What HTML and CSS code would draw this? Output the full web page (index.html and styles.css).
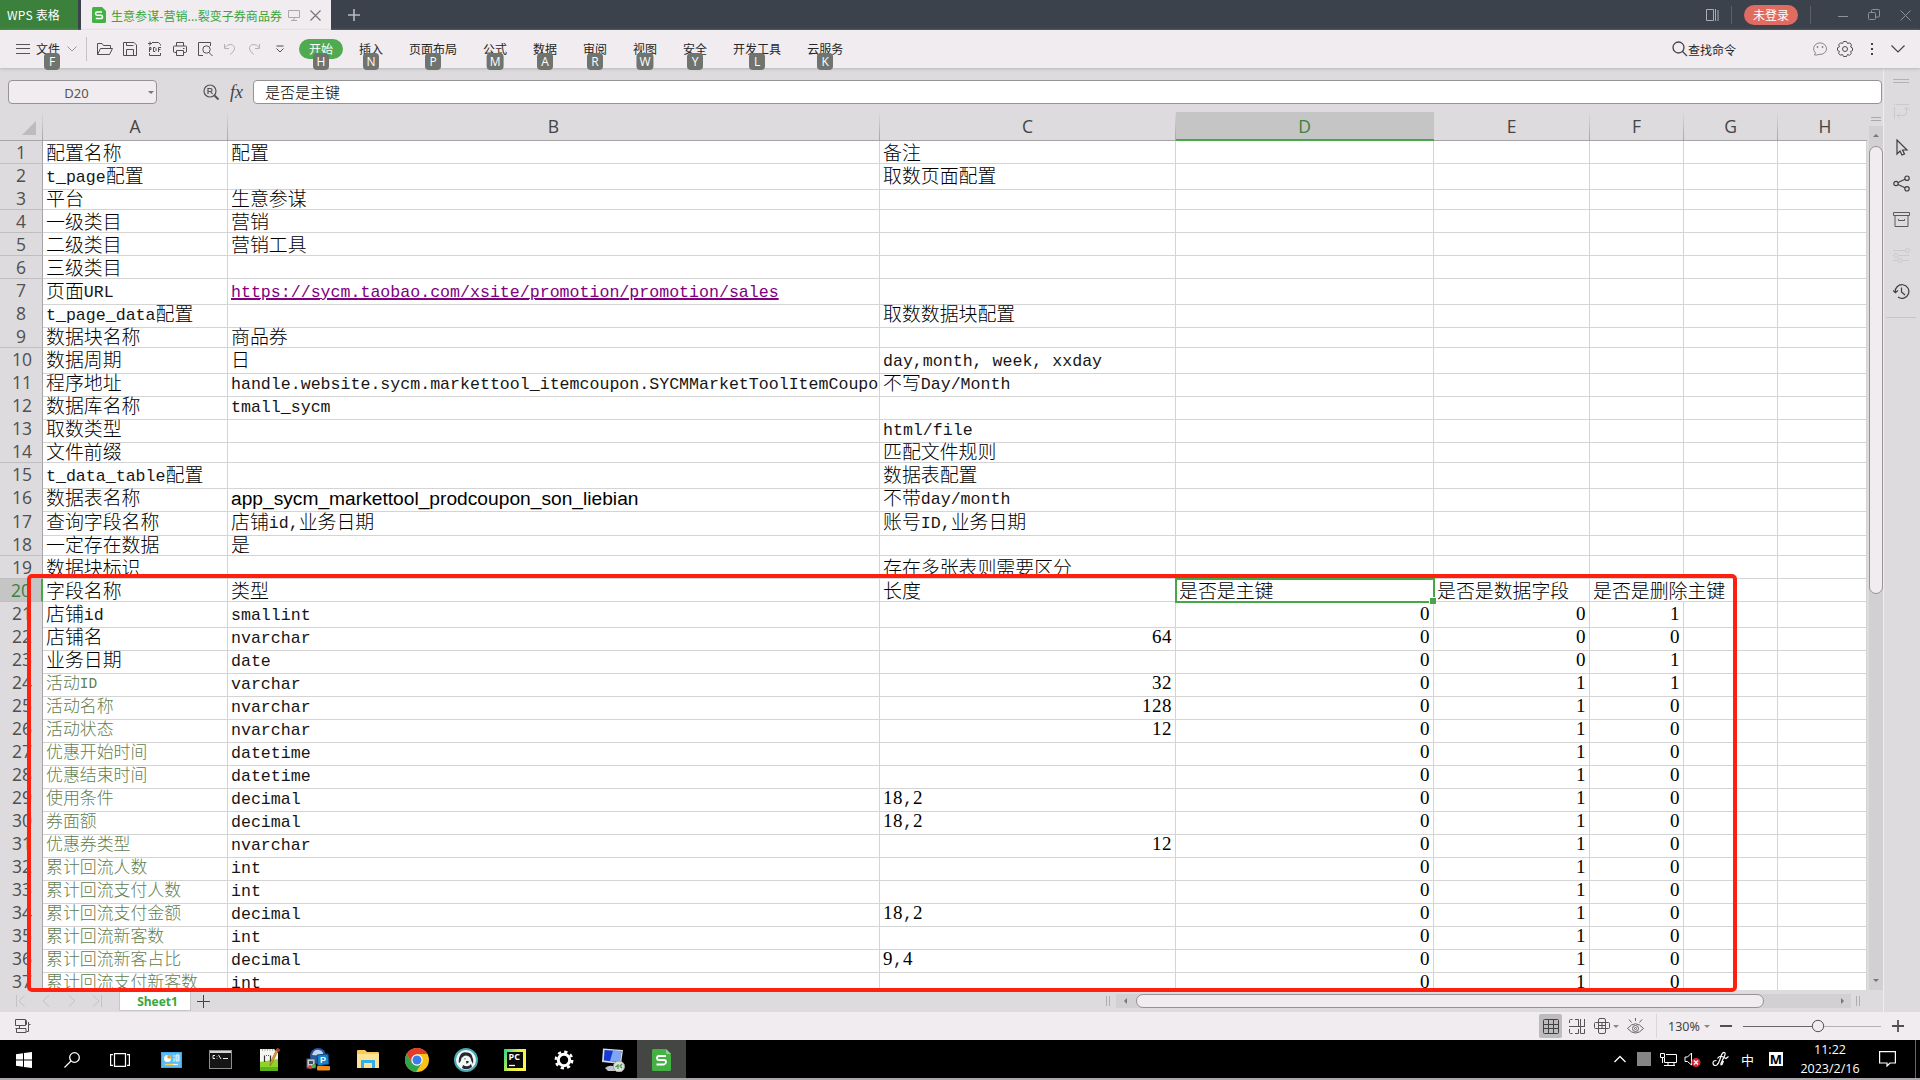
FILE: index.html
```html
<!DOCTYPE html>
<html lang="zh-CN">
<head>
<meta charset="utf-8">
<title>WPS 表格</title>
<link rel="stylesheet" href="styles.css">
</head>
<body>
<div class="app">
  <header class="titlebar">
    <div class="brand">WPS 表格</div>
    <div class="doc-tab">
      <svg class="doc-logo" width="14" height="16" viewBox="0 0 14 16"><path d="M1.500 0H10L14 4V14.500Q14 16 12.500 16H1.500Q0 16 0 14.500V1.500Q0 0 1.500 0Z" fill="#45b145"/><path d="M10 5H5.200Q3.500 5 3.500 6.600T5.200 8.200H8.800Q10.500 8.200 10.500 9.900T8.800 11.500H3.800" fill="none" stroke="#fff" stroke-width="1.500"/></svg>
      <span class="doc-name">生意参谋-营销...裂变子券商品券</span>
      <svg class="doc-monitor" width="12" height="12" viewBox="0 0 12 12" fill="none" stroke="#aaa8ab"><path d="M.5 1.500H11.500V8.500H.5ZM6 8.500V11M3 11.500H9"/></svg>
      <svg class="doc-close" width="11" height="11" viewBox="0 0 11 11" fill="none" stroke="#777579" stroke-width="1.200"><path d="M.5.5L10.500 10.500M10.500.5L.5 10.500"/></svg>
    </div>
    <svg class="new-tab" width="12" height="12" viewBox="0 0 12 12"><path d="M6 0V12M0 6H12" stroke="#b7bbc0" stroke-width="1.600"/></svg>
    <div class="window-tools">
      <svg width="14" height="14" viewBox="0 0 14 14" fill="none" stroke="#a9adb3"><path d="M1.500 1.500H8.500V12.500H1.500ZM10.500 1V13M13 2V13"/></svg>
      <i class="sep"></i>
      <div class="login">未登录</div>
      <i class="sep"></i>
      <svg width="12" height="12" viewBox="0 0 12 12" stroke="#8e939a"><path d="M1 7.500H11"/></svg>
      <svg width="12" height="12" viewBox="0 0 12 12" fill="none" stroke="#8e939a"><rect x=".5" y="3.500" width="7" height="7" rx="1"/><path d="M3.500 3V1.500Q3.500.5 4.500.5H10.500Q11.500.5 11.500 1.500V7Q11.500 8 10.500 8H8"/></svg>
      <svg width="11" height="11" viewBox="0 0 11 11" stroke="#8e939a"><path d="M.5.5L10.500 10.500M10.500.5L.5 10.500"/></svg>
    </div>
  </header>

  <nav class="ribbon">
    <div class="file-menu">
      <svg width="14" height="10" viewBox="0 0 14 10" stroke="#555"><path d="M0 .5H14M0 4.500H14M0 9.500H14"/></svg>
      <div class="menu-item file">文件<kbd>F</kbd></div>
      <svg class="file-arrow" width="10" height="6" viewBox="0 0 10 6" fill="none" stroke="#9b999c"><path d="M.5.5L5 5L9.500.5"/></svg>
    </div>
    <div class="quick">
      <svg width="16" height="16" viewBox="0 0 16 16" fill="none" stroke="#505050"><path d="M.5 13.500V2.500H5L6.500 4.500H13.500V7M.5 13.500L3.500 7.500H15.500L12.500 13.500Z"/></svg>
      <svg width="16" height="16" viewBox="0 0 16 16" fill="none" stroke="#505050"><path d="M1.500 1.500H12L14.500 4V14.500H1.500ZM4.500 1.500V4.500H11.500M4.500 14.500V8.500H11.500V14.500"/></svg>
      <svg width="16" height="16" viewBox="0 0 16 16" fill="none" stroke="#505050"><path d="M5 1.500H11.500L13.500 3.500V4.500M2.500 4.500V4M1 2.500H5M3 .5V4M2.500 12V14.500H13.500V12"/><path d="M2.500 11V6.500H4V8.500H2.500M6.500 6.500V10.500H8L9 9.500V7.500L8 6.500ZM11.500 11V6.500H14M11.500 8.500H13.500"/></svg>
      <svg width="16" height="16" viewBox="0 0 16 16" fill="none" stroke="#505050"><path d="M4.500 5V1.500H11.500V5M4 11.500H2.500Q1.500 11.500 1.500 10V6Q1.500 5 2.500 5H13.500Q14.500 5 14.500 6V10Q14.500 11.500 13.500 11.500H12M4.500 9.500H11.500V14.500H4.500ZM11 7.500H12.500"/></svg>
      <svg width="16" height="16" viewBox="0 0 16 16" fill="none" stroke="#505050"><path d="M6 14.500H1.500V1.500H13.500V5"/><circle cx="9.500" cy="8.500" r="3.700"/><path d="M12 11.500L15.500 15"/></svg>
      <svg width="16" height="16" viewBox="0 0 16 16" fill="none" stroke="#b5b2b5"><path d="M2.500 3V7.500H7M2.500 7Q5 3 9 3.500Q13 4.500 12.500 8Q12 11 8 13.500"/></svg>
      <svg width="16" height="16" viewBox="0 0 16 16" fill="none" stroke="#b5b2b5"><path d="M12.500 3V7.500H8M12.500 7Q10 3 6 3.500Q2 4.500 2.500 8Q3 11 7 13.500"/></svg>
      <svg class="quick-more" width="8" height="8" viewBox="0 0 8 8" fill="none" stroke="#505050"><path d="M.5 1H7.500M.5 3.500L4 7L7.500 3.500"/></svg>
    </div>
    <div class="tabs">
      <div class="menu-item active">开始<kbd>H</kbd></div>
      <div class="menu-item">插入<kbd>N</kbd></div>
      <div class="menu-item">页面布局<kbd>P</kbd></div>
      <div class="menu-item">公式<kbd>M</kbd></div>
      <div class="menu-item">数据<kbd>A</kbd></div>
      <div class="menu-item">审阅<kbd>R</kbd></div>
      <div class="menu-item">视图<kbd>W</kbd></div>
      <div class="menu-item">安全<kbd>Y</kbd></div>
      <div class="menu-item">开发工具<kbd>L</kbd></div>
      <div class="menu-item">云服务<kbd>K</kbd></div>
    </div>
    <div class="find">
      <svg width="16" height="16" viewBox="0 0 16 16" fill="none" stroke="#444" stroke-width="1.300"><circle cx="6.500" cy="6.500" r="5.500"/><path d="M10.500 10.500L15 15"/></svg>
      <span>查找命令</span>
    </div>
    <div class="ribbon-end">
      <svg width="16" height="16" viewBox="0 0 16 16" fill="none" stroke="#8b898c"><path d="M2.500 14L3.500 11.800A6.500 5.800 0 1 1 7 13.400Q5 14.300 2.500 14"/><path d="M5.500 5V7M10.500 5V7" stroke-width="1.400"/></svg>
      <svg width="18" height="18" viewBox="0 0 18 18" fill="none" stroke="#505050"><path d="M7.500 1.500H10.500L11.500 3.500L13.800 2.800L15.500 5L14.600 7L16.500 8V10.500L14.600 11.500L15.300 13.500L13.500 15.300L11.500 14.500L10.500 16.500H7.500L6.500 14.500L4.300 15.200L2.600 13.300L3.400 11.400L1.500 10.400V7.800L3.400 6.800L2.700 4.800L4.500 2.800L6.500 3.500Z"/><circle cx="9" cy="9" r="2.500"/></svg>
      <svg width="4" height="14" viewBox="0 0 4 14" fill="#444"><path d="M1 1H3V3H1ZM1 6H3V8H1ZM1 11H3V13H1Z"/></svg>
      <svg width="14" height="8" viewBox="0 0 14 8" fill="none" stroke="#444" stroke-width="1.200"><path d="M.5.5L7 7L13.500.5"/></svg>
    </div>
  </nav>

  <div class="main">
    <section class="workspace">
      <div class="formula-bar">
        <div class="name-box"><span>D20</span><i></i></div>
        <svg class="fx-find" width="17" height="17" viewBox="0 0 17 17" fill="none" stroke="#555" stroke-width="1.200"><circle cx="7" cy="7" r="6"/><path d="M11.500 11.500L15.500 15.500" stroke-width="2"/><path d="M5 10V4.500H7.500Q9 4.500 9 6T7.500 7.500H5M7.500 7.500L9.500 10"/></svg>
        <span class="fx">fx</span>
        <div class="formula-input">是否是主键</div>
      </div>
      <div class="sheet-area">
        <div class="sheet" id="sheet"></div>
        <div class="vscroll">
          <svg width="10" height="4" viewBox="0 0 10 4" stroke="#aaa8ab"><path d="M0 .5H10M0 3.500H10"/></svg>
          <div class="vtrack"><i class="up"></i><div class="vthumb"></div><i class="down"></i></div>
        </div>
        <div class="annotation"></div>
      </div>
      <div class="sheet-bar">
        <svg class="sheet-nav" width="88" height="12" viewBox="0 0 88 12" fill="none" stroke="#c4c2c5"><path d="M1.500 0V12M9.500 .5L4 6L9.500 11.500M34 .5L28 6L34 11.500M54 .5L60 6L54 11.500M78 .5L84 6L78 11.500M86.500 0V12"/></svg>
        <div class="sheet-tab">Sheet1</div>
        <svg class="sheet-add" width="13" height="13" viewBox="0 0 13 13" stroke="#444"><path d="M6.500 0V13M0 6.500H13"/></svg>
        <div class="hscroll">
          <i class="grip"></i>
          <div class="htrack"><i class="left"></i><div class="hthumb"></div><i class="right"></i></div>
          <i class="grip"></i>
        </div>
      </div>
    </section>
    <aside class="sidebar">
      <svg class="side-grip" width="16" height="4" viewBox="0 0 16 4" stroke="#b3b1b4"><path d="M0 .5H16M0 3.500H16"/></svg>
      <svg width="17" height="17" viewBox="0 0 17 17" fill="none" stroke="#cbc9cc"><path d="M3 1.500H16M1.500 4V16M1 1.500H2M4 12.500H10Q13.500 12.500 13.500 9V4.500M10.500 7L13.500 4L16.500 7M7 9.500L4 12.500L7 15.500"/></svg>
      <svg width="17" height="17" viewBox="0 0 17 17" fill="none" stroke="#3f3f3f" stroke-width="1.200"><path d="M4 1V15L7 12L9 16L11.500 15L9.500 11H14Z"/></svg>
      <svg width="17" height="17" viewBox="0 0 17 17" fill="none" stroke="#3f3f3f" stroke-width="1.200"><circle cx="3" cy="8.500" r="2.200"/><circle cx="14" cy="3.200" r="2.200"/><circle cx="14" cy="13.800" r="2.200"/><path d="M5 7.500L12 4.200M5 9.500L12 12.800"/></svg>
      <svg width="17" height="17" viewBox="0 0 17 17" fill="none" stroke="#5a5a5a"><path d="M.5 1.500H16.500V4.500H.5ZM2 4.500V15.500H15V4.500M5.500 8V9.500H11.500V8"/></svg>
      <svg width="17" height="17" viewBox="0 0 17 17" fill="none" stroke="#cbc9cc"><path d="M0 3.500H12.500M0 8.500H1M5.500 8.500H16M0 13.500H5M9.500 13.500H16"/><circle cx="14.500" cy="3.500" r="2"/><circle cx="3" cy="8.500" r="2"/><circle cx="7" cy="13.500" r="2"/></svg>
      <svg width="17" height="17" viewBox="0 0 17 17" fill="none" stroke="#3f3f3f" stroke-width="1.200"><path d="M2.300 9.500A6.800 6.800 0 1 1 5 14M0 7.500L2.300 9.800L5 7.500M8.500 4.500V9L12 12"/></svg>
      <i class="side-line"></i>
    </aside>
  </div>

  <footer class="statusbar">
    <svg class="macro" width="16" height="16" viewBox="0 0 16 16" fill="none" stroke="#505050"><path d="M.5 1.500H10.500V7.500H.5ZM10.500 3.500L11.500 2.500V6.500L10.500 5.500M4.500 7.500V10.500M.5 10.500H11V14.500H1.500V11M11.500 13.500H13.500V6.500H15.500M13.500 6.500V4"/></svg>
    <div class="view-tools">
      <div class="view-on"><svg width="16" height="15" viewBox="0 0 16 15" fill="none" stroke="#404040"><rect x=".5" y=".5" width="15" height="14" rx="1"/><path d="M5.500 0V15M10.500 0V15M0 5.500H16M0 9.500H16"/></svg></div>
      <svg width="16" height="15" viewBox="0 0 16 15" fill="none" stroke="#555"><path d="M.5 4V1.500Q.5.500 1.500.500H3.500M6 .5H9.500V7.500M0 7.500H16M11.500 0V7.500M15.500 0V7.500M.5 10V13.500Q.5 14.500 1.500 14.500H3.500M6 14.500H9.500V10M11.500 7.500V14.500H15.500V10"/></svg>
      <svg width="16" height="16" viewBox="0 0 16 16" fill="none" stroke="#555"><rect x="4.500" y=".5" width="7" height="15" rx="1.500"/><rect x=".5" y="4.500" width="15" height="6" rx="1"/><path d="M4.500 7.500H11.500M8 4.500V10.500"/></svg>
      <i class="caret"></i>
      <svg width="17" height="16" viewBox="0 0 17 16" fill="none" stroke="#666"><path d="M.5 10.500Q8.500 1 16.500 10.500Q8.500 19.500.5 10.500ZM8.500 0V3M2 1.500L4.500 4.500M15 1.500L12.500 4.500"/><circle cx="8.500" cy="10.500" r="3"/><circle cx="8.500" cy="10.500" r="1"/></svg>
      <i class="status-sep"></i>
      <span class="zoom-value">130%</span>
      <i class="caret"></i>
      <svg class="zoom-slider" width="184" height="14" viewBox="0 0 184 14" fill="none"><path d="M0 7H12M172 7H184M178 1V13" stroke="#505050" stroke-width="1.800"/><path d="M23 7.500H92" stroke="#666"/><path d="M104 7.500H161" stroke="#b3b1b4"/><circle cx="98" cy="7" r="5.700" stroke="#555" fill="#f0ecef"/></svg>
    </div>
  </footer>

  <div class="taskbar">
    <div class="task sys"><svg width="16" height="16" viewBox="0 0 16 16" fill="#fff"><path d="M0 2.200L7 1.200V7.500H0ZM8 1L16 0V7.500H8ZM0 8.500H7V14.800L0 13.800ZM8 8.500H16V16L8 15Z"/></svg></div>
    <div class="task sys"><svg width="16" height="16" viewBox="0 0 16 16" fill="none" stroke="#fff" stroke-width="1.300"><circle cx="10.500" cy="5.500" r="4.800"/><path d="M7 9L.5 15.500"/></svg></div>
    <div class="task sys"><svg width="20" height="14" viewBox="0 0 20 14" fill="none" stroke="#fff" stroke-width="1.200"><path d="M4.500.6H15.500V13.400H4.500ZM3 1.600H.6V12.400H3M17 1.600H19.400V12.400H17"/></svg></div>
    <div class="task first"><svg width="21" height="16" viewBox="0 0 21 16"><rect width="21" height="16" fill="#3fa9e8"/><rect x="1" y="1" width="19" height="14" fill="#5bbdf2"/><circle cx="6.500" cy="6.500" r="3.500" fill="#fff"/><path d="M6.500 6.500V3A3.500 3.500 0 0 1 10 6.500Z" fill="#f39b1d"/><path d="M12 4H14M12 7H14M12 9H14M15 3H18V9H15Z" stroke="#e5f6ff" fill="#9edaf9"/><path d="M4 12.500H12" stroke="#ffd34b" stroke-width="1.300"/><path d="M12 12.500H17" stroke="#e5f6ff" stroke-width="1.300"/></svg></div>
    <div class="task"><svg width="23" height="19" viewBox="0 0 23 19"><rect x=".5" y=".5" width="22" height="18" fill="#161616" stroke="#8d8d8d"/><path d="M1 2H22" stroke="#d6d6d6" stroke-width="2"/><path d="M6 5.500H4V8.500H6M8 6V6.500M8 8V8.500M9.500 5L12 9M14 8.500H19" stroke="#ededed" fill="none"/></svg></div>
    <div class="task"><svg width="24" height="24" viewBox="0 0 24 24"><path d="M2 1H16L20 5V23H2Z" fill="#f4f6ef"/><path d="M2 14L20 11V23H2Z" fill="#8fd32a"/><path d="M2 19H20V23H2Z" fill="#58b51c"/><path d="M4 2H17" stroke="#99a" stroke-dasharray="1 1.500" stroke-width="1.500"/><path d="M6.500 14V7.500M8 7.500H8.800M10 7.500H10.800M12.500 7.500V14" stroke="#333" fill="none" stroke-width="1.200"/><path d="M21 1L14 15L12 18L12.500 14L19 .5Z" fill="#e5a52d" stroke="#8d5c22" stroke-width=".6"/><path d="M19 .5L22.500 1.500L21 4L18 2.500Z" fill="#b8392e"/></svg></div>
    <div class="task"><svg width="25" height="24" viewBox="0 0 25 24"><circle cx="12" cy="8" r="8" fill="#2456a7"/><path d="M6 7Q8 1 13 2Q18 3 17 8" fill="#c2d5ec"/><path d="M11 7L22 6L23 16L12 18Z" fill="#1683cf" stroke="#0b487d"/><text x="14" y="15" class="icon-p">P</text><rect x="1" y="11" width="8" height="9" fill="#c5ced9" stroke="#49596b"/><path d="M3 13H7V16H3Z" fill="#3c4c5b"/><circle cx="4" cy="19" r="2" fill="#e53c31"/><circle cx="8" cy="18" r="2" fill="#4bae3a"/><rect x="11" y="18" width="13" height="4.500" rx="1" fill="#f38b1b"/></svg></div>
    <div class="task"><svg width="22" height="19" viewBox="0 0 22 19"><path d="M0 1Q0 0 1 0H8L10 2H21Q22 2 22 3V18H0Z" fill="#f7ca59"/><path d="M0 4H22V18H0Z" fill="#ffe394"/><path d="M4 18V10H18V18H15V13H7V18Z" fill="#34aeea"/></svg></div>
    <div class="task"><svg width="24" height="24" viewBox="0 0 24 24"><circle cx="12" cy="12" r="12" fill="#fbc116"/><path d="M1.600 6A12 12 0 0 1 22.400 6H12L7 15Z" fill="#e33b2e"/><path d="M1.600 6A12 12 0 0 0 11 24L17 14.500L7 15Z" fill="#2ea44e"/><circle cx="12" cy="12" r="5.700" fill="#fff"/><circle cx="12" cy="12" r="4.500" fill="#3b7ded"/></svg></div>
    <div class="task"><svg width="24" height="24" viewBox="0 0 24 24"><circle cx="12" cy="12" r="11" fill="#f2f7f8" stroke="#48a9b5" stroke-width="2"/><path d="M7 6Q9 3.500 13 4.500Q17 4.500 18 8Q20 12 19 16Q17 13 16.500 10L15 8.500Q12 7 10 8L7.500 10Q7 14 5 15Q4 10 7 6ZM10.500 10L12 11L10.500 11.500ZM12 13Q15 12.500 15 14L12.500 16ZM9 17Q14 20 17 16L18 19Q13 23 8 20Z" fill="#26292b"/></svg></div>
    <div class="task"><svg width="22" height="22" viewBox="0 0 22 22"><defs><linearGradient id="pyc" x1="0" y1="0" x2="1" y2=".5"><stop offset="0" stop-color="#20d68b"/><stop offset=".6" stop-color="#e6ef45"/><stop offset="1" stop-color="#fcf84a"/></linearGradient></defs><rect width="22" height="22" fill="url(#pyc)"/><rect x="3" y="3" width="16" height="16" fill="#080808"/><text x="4.500" y="11" class="icon-pc">PC</text><path d="M5 16.500H11" stroke="#fff" stroke-width="1.300"/></svg></div>
    <div class="task"><svg width="20" height="20" viewBox="0 0 20 20"><circle cx="10" cy="10" r="5.700" fill="none" stroke="#fff" stroke-width="3"/><circle cx="10" cy="10" r="8.200" fill="none" stroke="#fff" stroke-width="2.500" stroke-dasharray="3.220 3.220"/></svg></div>
    <div class="task"><svg width="24" height="24" viewBox="0 0 24 24"><path d="M4 20Q9 16 14 19L18 23H7Z" fill="#c1c4c6"/><path d="M2 .5L22 2L20 16L1 14Z" fill="#d6dbe0"/><path d="M3.500 2L20.500 3.300L18.500 14.300L2.800 12.500Z" fill="#1639d3"/><path d="M12 2.600L20.500 3.300L19 14L9 13Z" fill="#7fa5f3"/><circle cx="18" cy="18.500" r="5.500" fill="#dfe1de" stroke="#9ba09a"/><path d="M14.500 19L17 17V21M21 16L19 18L21 20" stroke="#3b9a3e" stroke-width="1.300" fill="none"/></svg></div>
    <div class="task current"><svg width="19" height="22" viewBox="0 0 19 22"><path d="M1.500 0H14L19 5V20.500Q19 22 17.500 22H1.500Q0 22 0 20.500V1.500Q0 0 1.500 0Z" fill="#45b145"/><path d="M14 0L19 5H15Q14 5 14 4Z" fill="#8bd08b"/><path d="M14 7H7Q5 7 5 9T7 11H12Q14 11 14 13T12 15.500H4.500" fill="none" stroke="#fff" stroke-width="1.800"/></svg></div>
    <div class="tray">
      <svg width="12" height="8" viewBox="0 0 12 8" fill="none" stroke="#fff" stroke-width="1.300"><path d="M.5 7L6 1.500L11.500 7"/></svg>
      <i class="tray-square"></i>
      <svg width="17" height="15" viewBox="0 0 17 15" fill="none" stroke="#fff"><path d="M6 2.500H16.500V10.500H4.500V6M8 10.500V13M14 10.500V13M4 13.500H15M.5 1.500H4.500V5.500H.5ZM2.500 5.500V11"/></svg>
      <svg width="17" height="15" viewBox="0 0 17 15" fill="none"><path d="M1 5H3.500L7.500 1V13L3.500 9.500H1Z" stroke="#fff"/><circle cx="12" cy="10.500" r="4.500" fill="#d92632"/><path d="M10 8.500L14 12.500M14 8.500L10 12.500" stroke="#fff" stroke-width="1.400"/></svg>
      <svg width="17" height="16" viewBox="0 0 17 16" fill="none" stroke="#fff" stroke-width="1.200"><path d="M4.500 9.500Q1 9.500 1 12T3.500 14.500Q5.500 14.500 6 12M6 13Q8 9 9 5Q10.500 1 12.500 1.500Q14 2.500 12 6L9 12.500Q8.500 14.500 10 13.500L11.500 10M5.500 7.500Q7 4.500 10 5.500L14 7.500L16.500 5.500"/></svg>
      <span class="ime">中</span>
      <span class="m-box">M</span>
      <div class="clock"><span>11:22</span><span>2023/2/16</span></div>
      <svg class="notice" width="17" height="16" viewBox="0 0 17 16" fill="none" stroke="#fff" stroke-width="1.200"><path d="M.6.6H16.400V12H11L8 15V12H.6Z"/></svg>
      <i class="desk-line"></i>
    </div>
  </div>
</div>
<script src="sheet.js"></script>
</body>
</html>
```
FILE: sheet.js
```js
const rows = [
  ["配置名称", "配置", "备注"],
  ["t_page配置", "", "取数页面配置"],
  ["平台", "生意参谋"],
  ["一级类目", "营销"],
  ["二级类目", "营销工具"],
  ["三级类目"],
  ["页面URL", "https://sycm.taobao.com/xsite/promotion/promotion/sales"],
  ["t_page_data配置", "", "取数数据块配置"],
  ["数据块名称", "商品券"],
  ["数据周期", "日", "day,month, week, xxday"],
  ["程序地址", "handle.website.sycm.markettool_itemcoupon.SYCMMarketToolItemCoupon", "不写Day/Month"],
  ["数据库名称", "tmall_sycm"],
  ["取数类型", "", "html/file"],
  ["文件前缀", "", "匹配文件规则"],
  ["t_data_table配置", "", "数据表配置"],
  ["数据表名称", "app_sycm_markettool_prodcoupon_son_liebian", "不带day/month"],
  ["查询字段名称", "店铺id,业务日期", "账号ID,业务日期"],
  ["一定存在数据", "是"],
  ["数据块标识", "", "存在多张表则需要区分"],
  ["字段名称", "类型", "长度", "是否是主键", "是否是数据字段", "是否是删除主键"],
  ["店铺id", "smallint", "", 0, 0, 1],
  ["店铺名", "nvarchar", 64, 0, 0, 0],
  ["业务日期", "date", "", 0, 0, 1],
  ["活动ID", "varchar", 32, 0, 1, 1],
  ["活动名称", "nvarchar", 128, 0, 1, 0],
  ["活动状态", "nvarchar", 12, 0, 1, 0],
  ["优惠开始时间", "datetime", "", 0, 1, 0],
  ["优惠结束时间", "datetime", "", 0, 1, 0],
  ["使用条件", "decimal", "18,2", 0, 1, 0],
  ["券面额", "decimal", "18,2", 0, 1, 0],
  ["优惠券类型", "nvarchar", 12, 0, 1, 0],
  ["累计回流人数", "int", "", 0, 1, 0],
  ["累计回流支付人数", "int", "", 0, 1, 0],
  ["累计回流支付金额", "decimal", "18,2", 0, 1, 0],
  ["累计回流新客数", "int", "", 0, 1, 0],
  ["累计回流新客占比", "decimal", "9,4", 0, 1, 0],
  ["累计回流支付新客数", "int", "", 0, 1, 0]
];

const sheet = document.getElementById("sheet");

function add(parent, className, html) {
  const el = document.createElement("div");
  el.className = className;
  el.innerHTML = html;
  parent.appendChild(el);
  return el;
}

const head = add(sheet, "row head", "");
add(head, "corner", "<i></i>");
"ABCDEFGH".split("").forEach(c => add(head, c === "D" ? "col-name selected" : "col-name", c));

// Latin runs use a monospace face and digits a serif one, next to the CJK text.
const mark = v => String(v).replace(/[0-9]+|[^0-9\u0080-\uffff]+/g, run =>
  `<span class="${/^[0-9]/.test(run) ? "digits" : "latin"}">${run}</span>`);

rows.forEach((cells, i) => {
  const n = i + 1;
  const row = add(sheet, "row" + (n === 16 ? " tall" : ""), "");
  add(row, "row-name" + (n === 20 ? " selected" : ""), n);
  for (let c = 0; c < 8; c++) {
    const v = cells[c] === undefined ? "" : cells[c];
    let cls = "cell";
    if (typeof v === "number") cls += " num";
    if (c === 0 && n >= 24) cls += " field";
    if (c === 1 && n === 7) cls += " link";
    if (c === 1 && n === 11) cls += " clipped";
    if (c === 1 && n === 16) cls += " sans";
    if (n === 20 && c === 3) cls += " cursor";
    if (n === 20 && c === 5) cls += " spill";
    add(row, cls, mark(v));
  }
});
```
FILE: styles.css
```css
* { box-sizing: border-box; }
body { margin: 0; overflow: hidden; font-family: "Noto Sans CJK SC", sans-serif; font-size: 12px; color: #262626; }
svg { display: block; flex: none; }
i { flex: none; }
.app { width: 1920px; height: 1080px; display: flex; flex-direction: column; background: #dddbde; }

/* title bar */
.titlebar { height: 30px; flex: none; display: flex; align-items: center; background: #3b424c; }
.brand { width: 78px; height: 30px; line-height: 30px; padding-left: 7px; background: #3b803b; color: #fff; font-size: 12px; letter-spacing: .2px; white-space: nowrap; }
.doc-tab { width: 250px; height: 30px; margin-left: 3px; padding-left: 11px; display: flex; align-items: center; background: #f0ecef; }
.doc-name { width: 172px; margin-left: 5px; color: #3aa53a; white-space: nowrap; letter-spacing: .05px; }
.doc-monitor { margin-left: 5px; }
.doc-close { margin-left: 10px; }
.new-tab { margin-left: 17px; }
.window-tools { margin-left: auto; padding-right: 9px; display: flex; align-items: center; }
.sep { width: 1px; height: 18px; margin: 0 12px; background: #5b6068; }
.login { width: 54px; height: 20px; border-radius: 10px; background: #e06b60; color: #fff; text-align: center; line-height: 19px; }
.window-tools svg:nth-of-type(2) { margin-left: 14px; }
.window-tools svg:nth-of-type(3) { margin-left: 19px; }
.window-tools svg:nth-of-type(4) { margin-left: 20px; }

/* ribbon */
.ribbon { height: 38px; flex: none; display: flex; align-items: center; background: #f0ecef; position: relative; z-index: 1; box-shadow: 0 1px 3px #b8b6b9; }
.file-menu { width: 87px; height: 24px; padding-left: 16px; display: flex; align-items: center; border-right: 1px solid #c6c3c6; }
.file-menu .menu-item { margin-left: 6px; }
.file-arrow { margin-left: 7px; }
.menu-item { position: relative; height: 20px; line-height: 19px; white-space: nowrap; }
.menu-item kbd { position: absolute; left: 50%; top: 14px; transform: translateX(-50%); min-width: 16px; height: 17px; padding: 0 3px; border-radius: 4px; background: #70746f; color: #fff; font: 12px/17px "Open Sans", sans-serif; text-align: center; }
.menu-item.file kbd { left: 16px; }
.quick { width: 212px; padding-left: 10px; display: flex; align-items: center; gap: 9px; }
.quick-more { margin-left: 4px; }
.tabs { display: flex; gap: 26px; }
.menu-item.active { width: 44px; margin-right: -10px; border-radius: 10px; background: #50ab50; color: #fff; text-align: center; }
.find { margin-left: auto; width: 141px; display: flex; align-items: center; }
.ribbon-end { display: flex; align-items: center; width: 108px; }
.find + .ribbon-end { margin-left: -1px; }
.ribbon-end svg:nth-child(2) { margin-left: 8px; }
.ribbon-end svg:nth-child(3) { margin-left: 16px; }
.ribbon-end svg:nth-child(4) { margin-left: 17px; }

/* workspace */
.main { flex: 1; min-height: 0; display: flex; }
.workspace { width: 1883px; display: flex; flex-direction: column; }
.formula-bar { height: 44px; flex: none; padding: 12px 1px 8px 8px; display: flex; align-items: center; }
.name-box { width: 149px; height: 24px; border: 1px solid #959396; border-radius: 4px; background: #f0ecef; display: flex; align-items: center; font: 13px "Noto Sans", sans-serif; color: #555; }
.name-box span { flex: 1; text-align: center; padding: 2px 4px 0 0; }
.name-box i { margin-right: 2px; border: 3px solid transparent; border-top-color: #777; border-bottom: 0; }
.fx-find { margin-left: 46px; }
.fx { width: 17px; margin-left: 10px; font: italic 18px "Liberation Serif", serif; color: #444; }
.formula-input { flex: 1; height: 24px; margin-left: 6px; padding-left: 11px; border: 1px solid #959396; border-radius: 4px; background: #fff; color: #000; font-size: 15px; font-weight: 300; line-height: 22px; }
.sheet-area { flex: 1; min-height: 0; display: flex; position: relative; }
.sheet { width: 1867px; overflow: hidden; background: #fff; }
.row { display: grid; grid-template-columns: 43px 185px 652px 296px 258px 156px 94px 94px 89px; height: 23px; }
.row.tall { height: 24px; }
.row.head { height: 29px; background: #dddbde; border-bottom: 1px solid #a6a4a7; }
.corner { background: linear-gradient(#dddbde, #a6a4a7) right / 1px 100% no-repeat; display: flex; justify-content: flex-end; align-items: flex-end; }
.corner i { margin: 0 7px 6px 0; border-left: 14px solid transparent; border-bottom: 14px solid #bdbbbd; }
.col-name { height: 28px; padding-right: 1px; line-height: 29px; text-align: center; font-family: "Open Sans", sans-serif; font-size: 17.5px; color: #444; background: linear-gradient(#dddbde, #a6a4a7) right / 1px 100% no-repeat; }
.col-name:last-child { padding: 0 0 0 5px; background: none; }
.col-name.selected { height: 29px; background: #c5c5c5; color: #3b803b; border-bottom: 2px solid #45a745; }
.row-name { padding-right: 10px; text-align: right; font-family: "Open Sans", sans-serif; font-size: 17.5px; line-height: 22px; color: #505050; background: #dddbde; border-right: 1px solid #a6a4a7; border-bottom: 1px solid #c0bec1; }
.row:nth-child(-n+10) .row-name { padding-right: 16px; }
.row-name.selected { background: #c5c5c5; color: #3b803b; border-right: 2px solid #45a745; }
.cell { min-width: 0; padding: 0 3px; white-space: nowrap; border-right: 1px solid #d4d4d4; border-bottom: 1px solid #d4d4d4; color: #000; font-size: 18.900px; font-weight: 300; line-height: 22px; }
.clipped { overflow: hidden; }
.latin, .digits { position: relative; top: -1px; font-weight: 400; line-height: 20px; white-space: pre; }
.latin { font-family: "Liberation Mono", monospace; font-size: 16.600px; color: #161616; }
.digits { font-family: "Liberation Serif", serif; font-size: 19px; letter-spacing: .460px; }
.num { text-align: right; }
.field { font-size: 16.900px; line-height: 21px; color: #5f8050; }
.field .latin { font-size: 14.500px; color: inherit; }
.link { color: #800080; text-decoration: underline; }
.link .latin { color: #800080; text-decoration: underline; }
.sans .latin { top: 0; font-family: "Liberation Sans", sans-serif; font-size: 19.200px; color: #000; }
.cursor { position: relative; z-index: 1; border-right-color: #45a745; outline: 2px solid #45a745; outline-offset: -1px; }
.cursor::after { content: ""; position: absolute; right: -3px; bottom: -3px; width: 6px; height: 6px; background: #45a745; border: 1px solid #fff; border-width: 1px 0 0 1px; }
.spill { border-right-color: transparent; }
.annotation { position: absolute; z-index: 2; left: 27px; top: 462px; width: 1710px; height: 418px; border: 4px solid #ff2010; border-radius: 5px; }
.vscroll { width: 16px; padding: 5px 0 0 2px; display: flex; flex-direction: column; align-items: center; }
.vtrack { width: 14px; flex: 1; margin-top: 5px; background: #d2d0d3; display: flex; flex-direction: column; align-items: center; }
.up { margin-top: 8px; border: 3px solid transparent; border-bottom-color: #777; border-top: 0; }
.down { margin: auto 0 8px; border: 3px solid transparent; border-top-color: #777; border-bottom: 0; }
.vthumb { width: 14px; height: 448px; margin-top: 9px; border: 1px solid #959396; border-radius: 7px; background: #f0ecef; }
.sheet-bar { height: 22px; flex: none; display: flex; align-items: center; }
.sheet-nav { margin-left: 15px; }
.sheet-tab { width: 72px; height: 21px; margin: 0 0 1px 16px; padding-left: 5px; background: #fff; border: 1px solid #c9c7ca; border-top: 0; text-align: center; font: bold 12px/23px "Open Sans", sans-serif; color: #3aa53a; }
.sheet-add { margin-left: 6px; }
.hscroll { margin: 0 23px 0 auto; display: flex; align-items: center; }
.grip { width: 4px; height: 10px; border: 1px solid #b0aeb1; border-width: 0 1px; }
.htrack { width: 735px; height: 14px; margin: 0 5px 0 6px; background: #d2d0d3; display: flex; align-items: center; }
.left { margin-left: 8px; border: 3px solid transparent; border-right-color: #777; border-left: 0; }
.right { margin: 0 7px 0 auto; border: 3px solid transparent; border-left-color: #777; border-right: 0; }
.hthumb { width: 628px; height: 14px; margin-left: 9px; border: 1px solid #959396; border-radius: 7px; background: #f0ecef; }
.sidebar { width: 37px; padding: 11px 2px 0 0; border-left: 1px solid #f0ecef; display: flex; flex-direction: column; align-items: center; gap: 19px; }
.side-grip { margin-bottom: 1px; }
.side-line { width: 30px; height: 1px; margin-top: -2px; background: #c6c4c7; }

/* status bar */
.statusbar { height: 28px; flex: none; display: flex; align-items: center; background: #f0ecef; }
.macro { margin-left: 15px; }
.view-tools { margin-left: auto; padding-right: 16px; display: flex; align-items: center; }
.view-on { width: 23px; height: 24px; margin-right: 7px; border-radius: 2px; background: #bdbbbd; display: grid; place-items: center; }
.view-tools > svg:nth-child(3) { margin-left: 9px; }
.caret { border: 3px solid transparent; border-top-color: #888; border-bottom: 0; margin-left: 3px; }
.view-tools > svg:nth-child(5) { margin-left: 8px; }
.status-sep { width: 1px; height: 24px; margin: 0 11px 0 12px; background: #dad7da; }
.zoom-value { width: 33px; font: 12.500px "Noto Sans", sans-serif; color: #444; }
.zoom-slider { margin-left: 10px; }

/* taskbar */
.taskbar { height: 40px; flex: none; display: flex; background: #000; border-bottom: 2px solid #aaa8ab; }
.task { width: 49px; height: 38px; display: grid; place-items: center; padding-top: 1px; }
.task.sys { width: 48px; }
.task.first { margin-left: 3px; }
.task.current { background: #444644; }
.icon-p { font: bold 9px "Liberation Sans", sans-serif; fill: #fff; }
.icon-pc { font: bold 9px "Open Sans", sans-serif; fill: #fff; }
.tray { margin-left: auto; display: flex; align-items: center; color: #fff; }
.tray-square { width: 14px; height: 14px; margin: 0 9px 0 11px; background: #868487; }
.tray svg:nth-of-type(3) { margin-left: 7px; }
.tray svg:nth-of-type(4) { margin-left: 11px; }
.ime { width: 14px; margin-left: 12px; font-size: 13px; }
.m-box { width: 14px; height: 14px; margin-left: 14px; background: #fff; color: #000; text-align: center; font: bold 13px/14px "Open Sans", sans-serif; }
.clock { width: 66px; margin-left: 14px; display: flex; flex-direction: column; text-align: center; font: 12.500px/19px "Open Sans", sans-serif; }
.notice { margin-left: 16px; }
.desk-line { width: 1px; height: 38px; margin: 0 4px 0 19px; background: #666; }
```
